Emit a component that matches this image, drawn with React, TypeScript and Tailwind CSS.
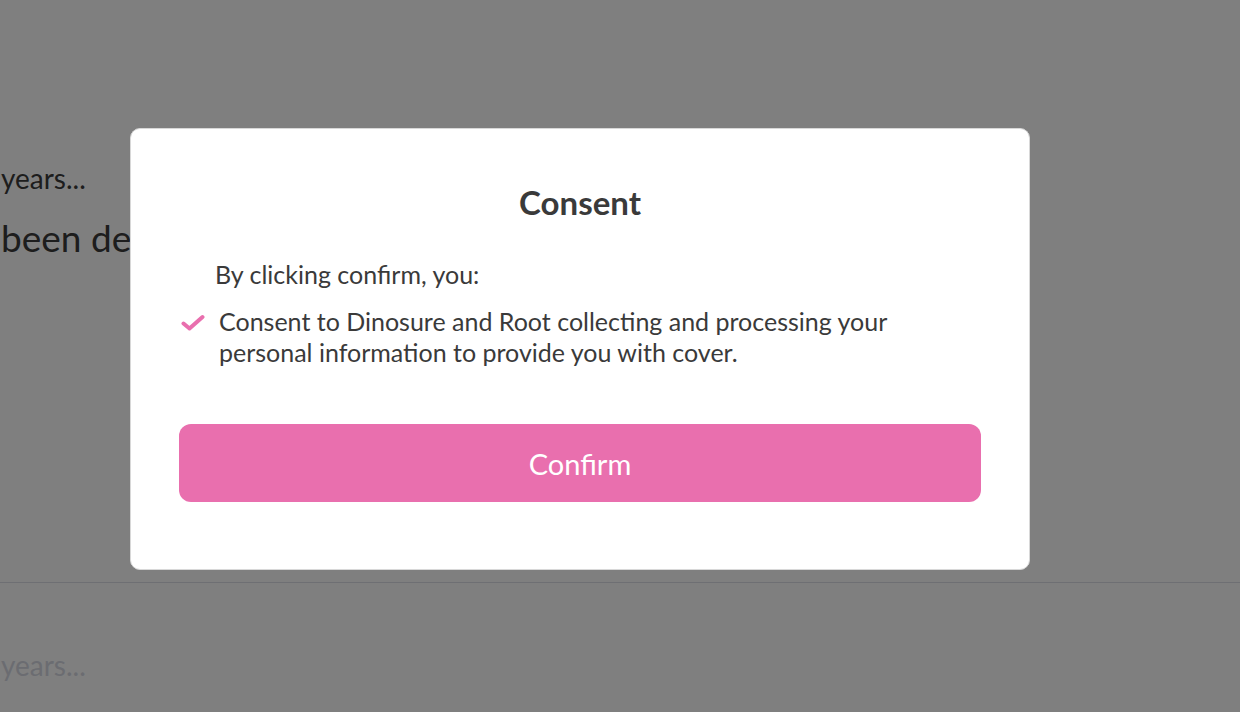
import React from "react";

const font = { fontFamily: "Lato, 'Open Sans', sans-serif" };

function CheckIcon() {
  return (
    <svg width="24" height="18" viewBox="0 0 24 18" className="shrink-0">
      <polyline points="2.5,9.5 8.5,14.5 21.5,3" fill="none" stroke="#e96fae" strokeWidth="4" strokeLinecap="round" strokeLinejoin="round" />
    </svg>
  );
}

function ConsentModal() {
  return (
    <div className="ml-[130px] mt-[128px] w-[900px] h-[442px] bg-white rounded-[10px] border border-[#d8d8d8] px-[48px] pt-[55px] pb-[67px] flex flex-col text-[#3a3a3a]">
      <h2 className="text-center text-[33px] leading-[36px] font-bold text-[#3a3a3a]">Consent</h2>
      <p className="mt-[38px] ml-[36px] text-[25px] leading-[32px]">By clicking confirm, you:</p>
      <div className="mt-[16px] flex items-start gap-[14px] ml-[2px]">
        <div className="mt-[8px]">
          <CheckIcon />
        </div>
        <p className="text-[25px] leading-[31px] w-[700px]">
          Consent to Dinosure and Root collecting and processing your personal information to provide you with cover.
        </p>
      </div>
      <button className="mt-auto h-[78px] w-full rounded-[12px] bg-[#e96fae] text-white text-[29px] leading-none">Confirm</button>
    </div>
  );
}

export default function App() {
  return (
    <div style={font} className="relative w-[1240px] h-[712px] overflow-hidden bg-white">
      {/* page behind the dialog */}
      <div className="pt-[161px]">
        <p className="text-[28px] leading-[34px] text-[#3a3a3a] pl-[1px]">years...</p>
        <p className="mt-[21px] text-[37px] leading-[44px] text-[#3a3a3a] pl-[1px] whitespace-nowrap">
          been declined for life cover?
        </p>
        <div className="mt-[322px] border-t border-[#dcdee6]" />
        <p className="mt-[65px] text-[28px] leading-[34px] text-[#d6d9e3] pl-[1px]">years...</p>
        <p className="mt-[22px] text-[37px] leading-[44px] font-bold text-[#3a3a3a] whitespace-nowrap">
          have you had any health conditions that limit your daily life?
        </p>
      </div>

      {/* overlay */}
      <div className="absolute inset-0 bg-black/50">
        <ConsentModal />
      </div>
    </div>
  );
}
